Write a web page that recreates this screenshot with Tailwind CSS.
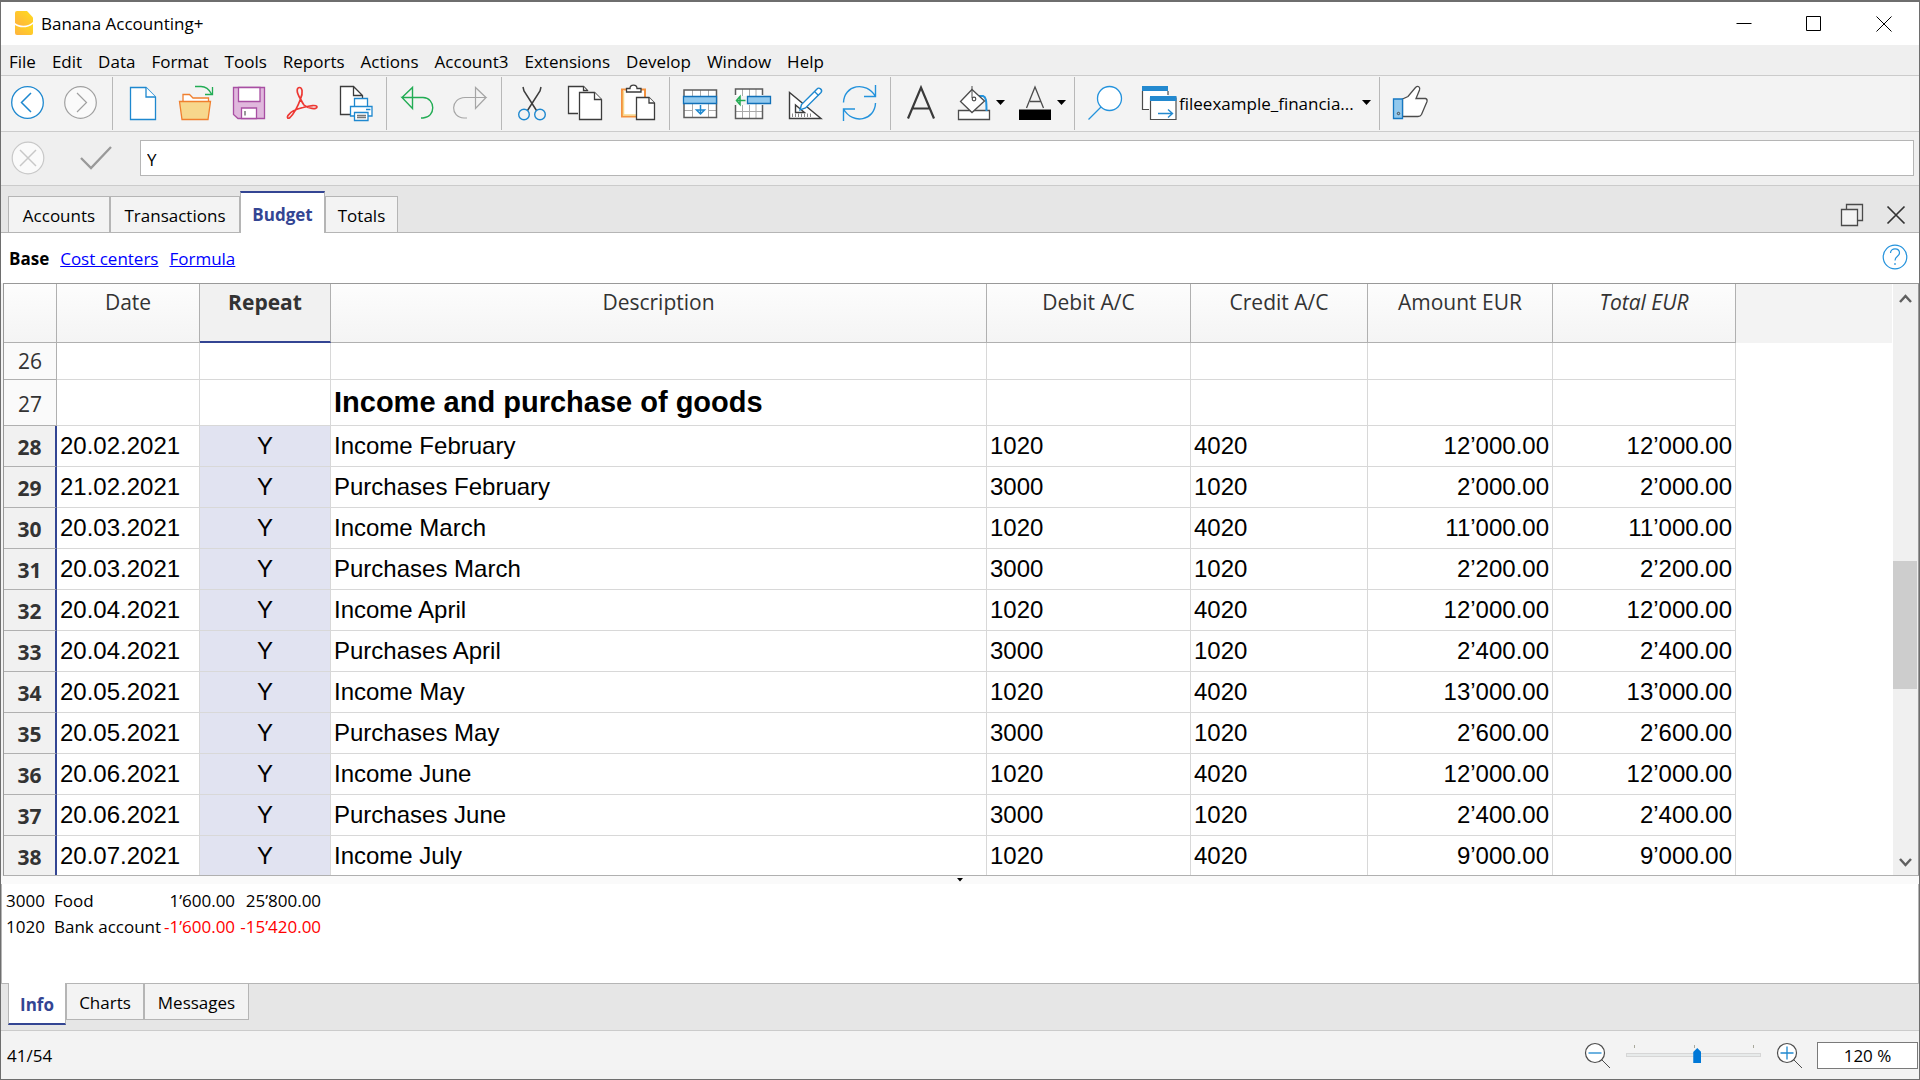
<!DOCTYPE html>
<html lang="en">
<head>
<meta charset="utf-8">
<title>Banana Accounting+</title>
<script src="https://cdn.jsdelivr.net/npm/@tailwindcss/browser@4"></script>
</head>
<body class="h-screen overflow-hidden bg-[#f3f3f3] font-['Open_Sans','Noto_Sans',sans-serif] text-[17px] leading-6 text-black">
<div class="flex h-full flex-col border border-t-2 border-[#6e6e6e]">

  <!-- Title bar -->
  <header class="flex h-[43px] shrink-0 items-center bg-white pl-[14px]">
    <svg class="mr-2 mb-0.5 h-6 w-[18px]" viewBox="0 0 18 24" aria-hidden="true">
      <defs><linearGradient id="logo" x1="1" y1="0" x2="0" y2="1"><stop offset="0" stop-color="#ffdd1c"/><stop offset="1" stop-color="#ffb23e"/></linearGradient></defs>
      <path d="M2 0H12L18 6.500V11C14 15.500 5 16 0 12V2Q0 0 2 0Z" fill="url(#logo)"/>
      <path d="M0 14C5 17.500 13 17 18 13V22Q18 24 16 24H2Q0 24 0 22Z" fill="url(#logo)"/>
    </svg>
    <h1>Banana Accounting+</h1>
    <div class="ml-auto flex h-full">
      <button class="w-[70px]" aria-label="Minimize"><svg class="mx-auto" width="16" height="16" viewBox="0 0 16 16"><path d="M.5 7.500H15.500" stroke="#000"/></svg></button>
      <button class="w-[70px]" aria-label="Maximize"><svg class="mx-auto" width="16" height="16" viewBox="0 0 16 16"><path d="M.5 .5H14.500V14.500H.5Z" fill="none" stroke="#000"/></svg></button>
      <button class="w-[70px]" aria-label="Close"><svg class="mx-auto" width="16" height="16" viewBox="0 0 16 16"><path d="M.5 .5L15.500 15.500M15.500 .5L.5 15.500" stroke="#000"/></svg></button>
    </div>
  </header>

  <!-- Menu -->
  <nav class="flex h-[31px] shrink-0 items-center gap-4 border-b border-[#cbcbcb] bg-[#efefef] pl-2 pt-[3px]" aria-label="Menu">
    <button>File</button><button>Edit</button><button>Data</button><button>Format</button><button>Tools</button><button>Reports</button><button>Actions</button><button>Account3</button><button>Extensions</button><button>Develop</button><button>Window</button><button>Help</button>
  </nav>

  <!-- Toolbar -->
  <div class="flex h-14 shrink-0 items-start border-b border-[#cbcbcb] bg-[#f3f3f3] pl-px pt-px [&>button]:mt-[3px] [&>label]:mt-[3px]" role="toolbar">
    <button aria-label="Back"><svg width="53" height="44" viewBox="2 80 53 44" fill="none"><circle cx="27.500" cy="102.500" r="15.800" fill="#fff" stroke="#1e88cf" stroke-width="1.300"/><path d="M31 93L21.500 102.500L31 112" stroke="#1e88cf" stroke-width="1.500"/></svg></button>
    <button aria-label="Forward"><svg width="53" height="44" viewBox="55 80 53 44" fill="none"><circle cx="80.500" cy="102.500" r="15.800" fill="#fafafa" stroke="#a0a0a0" stroke-width="1.200"/><path d="M77 93L86.500 102.500L77 112" stroke="#a0a0a0" stroke-width="1.200"/></svg></button>
    <div class="mx-1 h-[53px] w-px bg-[#b8b8b8]"></div>
    <button aria-label="New"><svg width="53" height="44" viewBox="117 80 53 44" fill="#fff" stroke="#1e88cf" stroke-width="1.300"><path d="M130.500 87.500H146L155.500 97V119.500H130.500Z"/><path d="M146 87.500V97H155.500"/></svg></button>
    <button aria-label="Open"><svg width="53" height="44" viewBox="170 80 53 44" fill="none"><path d="M183 101V94.500H189.500L193 98H208.500V101" fill="#fff" stroke="#f07f2e" stroke-width="1.300"/><path d="M179.500 101.500H210.500L208 119.500H182Z" fill="#f7d78c" stroke="#f07f2e" stroke-width="1.300"/><path d="M195 86.500H201C206 86.500 209 89 211.500 94M212.500 87V94.500H205" stroke="#22ac54" stroke-width="1.300"/></svg></button>
    <button aria-label="Save"><svg width="53" height="44" viewBox="223 80 53 44" stroke="#a84fa3" stroke-width="1.300"><path d="M233.500 87.500H264.500V118.500H238L233.500 114.500Z" fill="#e0b8dd"/><path d="M238.500 87.500H260V101.500H238.500Z" fill="#fff"/><path d="M241.500 118.500V108H256.500V118.500Z" fill="#fff"/><path d="M245 111V115.500" stroke="#777" stroke-width="1.500"/></svg></button>
    <button aria-label="PDF"><svg width="53" height="44" viewBox="276 80 53 44" fill="none" stroke="#ed3833" stroke-width="1.700"><path d="M300.500 99C295.500 91 297 87.500 299.500 87.500S303.500 92 300.500 99C298 106 293.500 114 290 117.500C288 119 286.500 118 288 115.500C290 112 296 109 303 107.500C310 105.500 317 104.500 317 107C317 109.500 308 109 304 105C302.500 103 301.500 101 300.500 99Z"/></svg></button>
    <button aria-label="Print preview"><svg width="53" height="44" viewBox="329 80 53 44"><path d="M340.500 86.500H353.500L362.500 95.500V114.500H340.500Z" fill="#fff"/><path d="M350 114.500H340.500V86.500H353.500L362.500 95.500V98M353.500 86.500V95.500H362" fill="none" stroke="#3c3c3c" stroke-width="1.300"/><g fill="#fff" stroke="#1e88cf" stroke-width="1.300"><path d="M354.500 98.500H367.500V107H354.500Z"/><path d="M350.500 106.500H372V116H350.500Z"/><path d="M354.500 112.500H368V120.500H354.500Z"/></g><path d="M366 109.500H370.500" stroke="#1e88cf" stroke-width="1.500"/><path d="M357 115.500H366M357 117.500H366" stroke="#777" stroke-width="1.300"/></svg></button>
    <div class="mx-1 h-[53px] w-px bg-[#b8b8b8]"></div>
    <button aria-label="Undo"><svg width="53" height="44" viewBox="391 80 53 44" fill="none" stroke="#22ac54" stroke-width="1.400"><path d="M402 97.500L412.500 87.500V108.500L402 97.500H423C436 98 436 117.500 423 118H421"/></svg></button>
    <button aria-label="Redo"><svg width="53" height="44" viewBox="444 80 53 44" fill="none" stroke="#a5a5a5" stroke-width="1.200"><path d="M486 97.500L475.500 87.500V108.500L486 97.500H465C450 98 450 117.500 464 118H467"/></svg></button>
    <div class="mx-1 h-[53px] w-px bg-[#b8b8b8]"></div>
    <button aria-label="Cut"><svg width="53" height="44" viewBox="506 80 53 44" fill="none"><path d="M523 87L524 91L536.500 110.500M541 87L540 91L527.500 110.500" stroke="#3c3c3c" stroke-width="1.500"/><circle cx="524" cy="114.500" r="5.300" stroke="#1e88cf" stroke-width="1.400"/><circle cx="540" cy="114.500" r="5.300" stroke="#1e88cf" stroke-width="1.400"/></svg></button>
    <button aria-label="Copy"><svg width="53" height="44" viewBox="559 80 53 44" fill="#fff" stroke="#3c3c3c" stroke-width="1.300"><path d="M578 113.500H568.500V86.500H583.500L588 91"/><path d="M583.500 86.500V90.500H587"/><path d="M579.500 92.500H594.500L601.500 99.500V119.500H579.500Z"/><path d="M594.500 92.500V99.500H601.500"/></svg></button>
    <button aria-label="Paste"><svg width="53" height="44" viewBox="612 80 53 44" fill="#fff"><path d="M622 89.500H645V116.500H622Z" fill="#fff" stroke="#f3913e" stroke-width="2"/><path d="M623.500 91V115H636" fill="none" stroke="#f7d78c" stroke-width="1.500"/><path d="M626.500 92V88.500H630C630 84 637 84 637 88.500H641V92Z" stroke="#3c3c3c" stroke-width="1.300"/><path d="M636.500 97.500H649L654.500 103V119.500H636.500Z" stroke="#3c3c3c" stroke-width="1.300"/><path d="M649 97.500V103H654.500" stroke="#3c3c3c" stroke-width="1.300"/></svg></button>
    <div class="mx-1 h-[53px] w-px bg-[#b8b8b8]"></div>
    <button aria-label="Insert rows"><svg width="53" height="44" viewBox="674 80 53 44" fill="none"><path d="M684 90H716.500V117.500H684Z" fill="#fff"/><path d="M692.500 90V117M700.500 90V96M708.500 90V117M684 110.500H692M709 110.500H716" stroke="#aaa"/><path d="M684 90H716.500V117.500H684Z" stroke="#5c5c5c" stroke-width="1.500"/><path d="M683.500 96.500H716.500V103.500H683.500Z" fill="#92c9ee" stroke="#1170b8" stroke-width="1.300"/><path d="M700.500 105V114M696.500 110L700.500 114L704.500 110Z" stroke="#1e88cf" stroke-width="1.500"/></svg></button>
    <button aria-label="Delete rows"><svg width="53" height="44" viewBox="727 80 53 44" fill="none"><path d="M735.500 89H762.500V118H735.500Z" fill="#fff"/><path d="M742.500 89V118M749.500 89V118M756 89V118M735.500 111.500H762.500" stroke="#aaa"/><path d="M735.500 95V89H762.500V95M735.500 105V118.500H762.500V105" stroke="#5c5c5c" stroke-width="1.500"/><path d="M735 96H750V105H735Z" fill="#f3f3f3"/><path d="M747.500 96.500H770.500V103.500H747.500Z" fill="#92c9ee" stroke="#1170b8" stroke-width="1.300"/><path d="M745.500 100.500H736.500M740 96.500L736.500 100.500L740 104.500Z" stroke="#22ac54" stroke-width="1.500"/></svg></button>
    <button aria-label="Recalculate"><svg width="53" height="44" viewBox="780 80 53 44" fill="none"><path d="M789.500 92.500V118.500H821Z" fill="#fff" stroke="#3c3c3c" stroke-width="1.400"/><path d="M795.500 105V112.500H804.500Z" stroke="#3c3c3c" stroke-width="1.400"/><path d="M792.500 113.500V117M795.500 113.500V117M798.500 113.500V117M801.500 113.500V117M804.500 113.500V117M807.500 113.500V117M810.500 113.500V117" stroke="#888"/><path d="M800 110L801.500 104.500L817 89C819 86.500 823 90 821 92.500L805.500 108Z" fill="#fff" stroke="#1e88cf" stroke-width="1.400"/><path d="M814.500 91.500L818.500 95.500" stroke="#1e88cf" stroke-width="1.300"/></svg></button>
    <button aria-label="Refresh"><svg width="53" height="44" viewBox="833 80 53 44" fill="none" stroke="#2392dc" stroke-width="1.400"><path d="M843.500 102.500C844 85 866 80.500 875.500 96.500M875.500 85V96.500H864"/><path d="M875.500 103C875 120 853 125.500 843.500 109M843.500 121V109H855"/></svg></button>
    <div class="mx-1 h-[53px] w-px bg-[#b8b8b8]"></div>
    <button aria-label="Bold"><svg width="53" height="44" viewBox="895 80 53 44" fill="none" stroke="#3a3a3a" stroke-width="2.200"><path d="M908 118.500L921 87.500L934 118.500M913 108.500H929"/></svg></button>
    <button aria-label="Background colour"><svg width="61" height="44" viewBox="948 80 61 44" fill="#fff"><path d="M958.500 110.500H989.500V119.500H958.500Z" stroke="#4c4c4c" stroke-width="1.300"/><path d="M977 96H983C986 97 986.500 100 986.500 111" fill="none" stroke="#2392dc" stroke-width="2"/><path d="M972 89.500L984.500 101L972 112.500L960.500 101.500Z" stroke="#4c4c4c" stroke-width="1.300"/><path d="M972 86V98" stroke="#4c4c4c"/><circle cx="974" cy="99" r="1.800" stroke="#4c4c4c" stroke-width="1.200"/><path d="M996 100H1005L1000.500 105Z" fill="#000"/></svg></button>
    <button aria-label="Text colour"><svg width="61" height="44" viewBox="1009 80 61 44" fill="none"><path d="M1019 109.500H1051V120H1019Z" fill="#000"/><path d="M1026.500 108L1035 87L1043.500 108M1030 101.500H1041" stroke="#4c4c4c" stroke-width="1.300"/><path d="M1057 100H1066L1061.500 105Z" fill="#000"/></svg></button>
    <div class="mx-1 h-[53px] w-px bg-[#b8b8b8]"></div>
    <button aria-label="Find"><svg width="53" height="44" viewBox="1079 80 53 44" stroke="#2392dc" stroke-width="1.300"><circle cx="1109.500" cy="98.500" r="12" fill="#fff"/><path d="M1101 107L1088.500 119.500"/></svg></button>
    <label class="relative flex h-11 w-[243px] items-center">
      <svg class="shrink-0" width="47" height="44" viewBox="1132 80 47 44" fill="#fff"><path d="M1142.500 88H1168V109.500H1142.500Z"/><path d="M1168 91V95M1142.500 91V109.500H1149" fill="none" stroke="#4c4c4c" stroke-width="1.200"/><path d="M1142 86H1168V91H1142Z" fill="#2389cf"/><path d="M1150.500 98H1176V119.500H1150.500Z" stroke="#4c4c4c" stroke-width="1.200"/><path d="M1150 96H1176.500V101H1150Z" fill="#2389cf"/><path d="M1158 113.500H1172.500M1168 109.500L1172.500 113.500L1168 117.500" fill="none" stroke="#2389cf" stroke-width="1.400"/></svg>
      <select class="mt-1 h-8 w-full appearance-none bg-transparent" aria-label="Open files"><option>fileexample_financia...</option></select>
      <svg class="pointer-events-none absolute right-1 top-5" width="9" height="5" viewBox="0 0 9 5"><path d="M0 0H9L4.500 5Z"/></svg>
    </label>
    <div class="mx-1 h-[53px] w-px bg-[#b8b8b8]"></div>
    <button aria-label="Like"><svg width="53" height="44" viewBox="1384 80 53 44"><path d="M1402.500 99L1408 96.500L1415.500 87.500C1418 85 1420.500 87 1419.500 90L1416 98.500H1425.500Q1427.500 99 1427 101.500L1421.500 114.500Q1420.500 116.500 1418 116.500H1402.500Z" fill="#fff" stroke="#4c4c4c" stroke-width="1.300"/><path d="M1393.500 99H1402.500V118.500H1393.500Z" fill="#92c9ee" stroke="#1678c2" stroke-width="1.300"/><circle cx="1398.500" cy="113.500" r="1.200" fill="none" stroke="#444"/></svg></button>
  </div>

  <!-- Cell entry -->
  <div class="flex h-[54px] shrink-0 items-start border-b border-[#cbcbcb] bg-[#efefef] pl-[10px] pr-[5px] pt-2">
    <button class="mt-px" aria-label="Cancel"><svg width="34" height="34" viewBox="0 0 34 34" fill="none" stroke="#c8c8c8"><circle cx="17" cy="17" r="15.800" fill="#fafafa" stroke-width="1.200"/><path d="M9 9L25 25M25 9L9 25" stroke-width="1.500"/></svg></button>
    <button class="ml-[35px] mt-px" aria-label="Confirm"><svg width="32" height="34" viewBox="0 0 32 34" fill="none"><path d="M1 17L11 27L31 6" stroke="#999" stroke-width="2.300"/></svg></button>
    <input class="ml-7 h-9 min-w-0 flex-1 border border-[#b5b5b5] bg-white px-[6px] pt-0.5 outline-none" aria-label="Cell content" value="Y">
  </div>

  <!-- Table tabs -->
  <div class="flex h-[47px] shrink-0 items-end bg-[#e6e6e6]">
    <div class="h-px w-[7px] bg-[#b5b5b5]"></div>
    <button class="h-[37px] w-[102px] border border-[#b5b5b5] bg-[#f3f3f3] pt-0.5">Accounts</button>
    <button class="h-[37px] w-[130px] border border-[#b5b5b5] bg-[#f3f3f3] pt-0.5">Transactions</button>
    <button class="h-[42px] w-[85px] border-x border-t-2 border-x-[#b5b5b5] border-t-[#334593] bg-white pt-1 font-bold text-[#334593]">Budget</button>
    <button class="h-[37px] w-[73px] border border-[#b5b5b5] bg-[#f3f3f3] pt-0.5">Totals</button>
    <div class="flex h-full flex-1 items-center justify-end gap-[22px] border-b border-[#b5b5b5] pr-[13px] pt-[11px]">
      <button aria-label="Restore"><svg width="24" height="24" viewBox="0 0 24 24" fill="none" stroke="#4a4a4a" stroke-width="1.300"><path d="M6.500 6V1.500H22.500V17.500H18"/><path d="M1.500 6.500H17.500V22.500H1.500Z" fill="#f3f3f3"/></svg></button>
      <button aria-label="Close table"><svg width="20" height="20" viewBox="0 0 20 20" stroke="#333" stroke-width="1.700"><path d="M1.500 1.500L18.500 18.500M18.500 1.500L1.500 18.500"/></svg></button>
    </div>
  </div>

  <!-- Views -->
  <nav class="flex h-[50px] shrink-0 items-center gap-[11px] bg-white pl-2 pr-[11px] pt-0.5" aria-label="Views">
    <strong>Base</strong>
    <a href="#cost" class="text-[#0000ff] underline">Cost centers</a>
    <a href="#formula" class="text-[#0000ff] underline">Formula</a>
    <button class="mb-1 ml-auto" aria-label="Help"><svg width="26" height="26" viewBox="0 0 26 26" fill="none" stroke="#2392dc" stroke-width="1.200"><circle cx="13" cy="13" r="11.800"/><path d="M8.500 9C8.500 3.500 17.500 3.500 17.500 9C17.500 12.500 13 12 13 16.500M13 19V21"/></svg></button>
  </nav>

  <!-- Budget table -->
  <main class="ml-0.5 flex min-h-0 flex-1 border border-b-[#b0b0b0] border-[#999] bg-white">
    <div class="min-w-0 flex-1 overflow-hidden">
      <div class="flex">
      <table class="w-[1732px] shrink-0 table-fixed border-separate border-spacing-0 font-['Liberation_Sans',Arial,sans-serif] text-2xl">
        <colgroup><col class="w-[53px]"><col class="w-[143px]"><col class="w-[131px]"><col class="w-[656px]"><col class="w-[204px]"><col class="w-[177px]"><col class="w-[185px]"><col class="w-[183px]"></colgroup>
        <thead>
          <tr class="h-[59px] bg-linear-to-b from-[#fdfdfd] to-[#f4f4f4] font-['Open_Sans','Noto_Sans',sans-serif] text-[21px] leading-7 text-[#333] *:border-b *:border-r *:border-[#b0b0b0] *:px-0 *:pb-0 *:pt-1 *:align-top *:font-normal">
            <th></th><th>Date</th>
            <th class="border-b-2! border-b-[#334593]! bg-[#f1f1f1] font-bold!">Repeat</th>
            <th>Description</th><th>Debit A/C</th><th>Credit A/C</th><th>Amount EUR</th><th class="italic">Total EUR</th>
          </tr>
        </thead>
        <tbody id="rows"></tbody>
      </table>
      <div class="h-[59px] flex-1 bg-[#f3f3f3]"></div>
      </div>
    </div>
    <div class="flex w-[26px] shrink-0 flex-col items-center border-l border-white bg-[#f0f0f0] pr-px">
      <svg class="mt-[9px] shrink-0" width="13" height="11" viewBox="0 0 13 11"><path d="M1 9L6.500 3L12 9" fill="none" stroke="#606060" stroke-width="2.500"/></svg>
      <div class="grow-255"></div>
      <div class="h-32 w-full shrink-0 bg-[#cdcdcd]"></div>
      <div class="grow-166"></div>
      <svg class="mb-[7px] shrink-0" width="13" height="11" viewBox="0 0 13 11"><path d="M1 2L6.500 8L12 2" fill="none" stroke="#606060" stroke-width="2.500"/></svg>
    </div>
  </main>

  <div class="flex h-2 shrink-0 justify-center bg-[#fafafa] pt-0.5"><svg width="6" height="4" viewBox="0 0 6 4"><path d="M0 0H6L3 3.500Z"/></svg></div>

  <!-- Info panel -->
  <section class="h-[99px] shrink-0 border-x border-[#b5b5b5] bg-white pl-1 pt-1">
    <table class="table-fixed border-separate border-spacing-0 whitespace-nowrap leading-[26px]">
      <colgroup><col class="w-[48px]"><col class="w-[106px]"><col class="w-[74px]"><col class="w-[86px]"></colgroup>
      <tr><td>3000</td><td>Food</td><td class="text-right">1’600.00</td><td class="text-right">25’800.00</td></tr>
      <tr><td>1020</td><td>Bank account</td><td class="text-right text-[#ff0000]">-1’600.00</td><td class="text-right text-[#ff0000]">-15’420.00</td></tr>
    </table>
  </section>

  <!-- Panel tabs -->
  <div class="flex h-12 shrink-0 items-start border-b border-[#cbcbcb] bg-[#e6e6e6]">
    <div class="h-px w-[7px] bg-[#b5b5b5]"></div>
    <button class="h-[42px] w-[58px] border-x border-b-2 border-x-[#b5b5b5] border-b-[#334593] bg-white pt-1 font-bold text-[#334593]">Info</button>
    <button class="h-[37px] w-[78px] border border-[#b5b5b5] bg-[#f3f3f3] pt-0.5">Charts</button>
    <button class="h-[37px] w-[105px] border border-[#b5b5b5] bg-[#f3f3f3] pt-0.5">Messages</button>
    <div class="h-px flex-1 bg-[#b5b5b5]"></div>
  </div>

  <!-- Status bar -->
  <footer class="flex h-12 shrink-0 items-center bg-[#f3f3f3] pl-[6px] pr-px">
    <span class="mr-auto pt-0.5">41/54</span>
    <button aria-label="Zoom out"><svg width="27" height="27" viewBox="0 0 27 27" fill="none" stroke="#4c4c4c"><circle cx="11" cy="11" r="9.500" fill="#fff" stroke-width="1.200"/><path d="M17.500 17.500L26 26"/><path d="M4.500 11H17.500" stroke="#1e88cf" stroke-width="1.300"/></svg></button>
    <div class="relative mx-[15px] flex h-6 items-center">
      <svg class="absolute left-2 top-0.5" width="120" height="3" viewBox="0 0 120 3"><path d="M.5 0V3M60.500 0V3M119.500 0V3" stroke="#a9a99c"/></svg>
      <input type="range" min="0" max="100" value="53" aria-label="Zoom" class="relative h-4 w-[135px] appearance-none bg-transparent [&::-webkit-slider-runnable-track]:h-1 [&::-webkit-slider-runnable-track]:border [&::-webkit-slider-runnable-track]:border-[#d6d6d6] [&::-webkit-slider-runnable-track]:bg-[#e7eaea] [&::-webkit-slider-thumb]:mt-[-6px] [&::-webkit-slider-thumb]:h-[15px] [&::-webkit-slider-thumb]:w-2 [&::-webkit-slider-thumb]:appearance-none [&::-webkit-slider-thumb]:bg-[#0078d7] [&::-webkit-slider-thumb]:[clip-path:polygon(50%_0,100%_27%,100%_100%,0_100%,0_27%)]">
    </div>
    <button aria-label="Zoom in"><svg width="27" height="27" viewBox="0 0 27 27" fill="none" stroke="#4c4c4c"><circle cx="11" cy="11" r="9.500" fill="#fff" stroke-width="1.200"/><path d="M17.500 17.500L26 26"/><path d="M4.500 11H17.500M11 4.500V17.500" stroke="#1e88cf" stroke-width="1.300"/></svg></button>
    <input class="ml-[14px] h-[27px] w-[101px] border border-[#7a7a7a] bg-white text-center outline-none" aria-label="Zoom percent" value="120 %">
  </footer>
</div>

<script>
  const months = [
    ["20.02.2021", "Income February", "12’000.00"], ["21.02.2021", "Purchases February", "2’000.00"],
    ["20.03.2021", "Income March", "11’000.00"], ["20.03.2021", "Purchases March", "2’200.00"],
    ["20.04.2021", "Income April", "12’000.00"], ["20.04.2021", "Purchases April", "2’400.00"],
    ["20.05.2021", "Income May", "13’000.00"], ["20.05.2021", "Purchases May", "2’600.00"],
    ["20.06.2021", "Income June", "12’000.00"], ["20.06.2021", "Purchases June", "2’400.00"],
    ["20.07.2021", "Income July", "9’000.00"]
  ];
  const empty = "<td></td>".repeat(4);
  let html = `
    <tr class="h-[37px] *:border-b *:border-r *:border-[#d8d8d8]"><th class="bg-[#fafafa] border-r-[#b0b0b0]! border-b-[#b0b0b0]! p-0 font-['Open_Sans','Noto_Sans',sans-serif] text-[21px] font-normal leading-7 text-[#333]">26</th><td></td><td></td><td></td>${empty}</tr>
    <tr class="h-[46px] *:border-b *:border-r *:border-[#d8d8d8]"><th class="bg-[#fafafa] border-r-[#b0b0b0]! border-b-[#b0b0b0]! p-0 pt-0.5 font-['Open_Sans','Noto_Sans',sans-serif] text-[21px] font-normal leading-7 text-[#333]">27</th><td></td><td></td><td class="px-[3px] pt-0 pb-0.5 text-[29px] font-bold leading-8">Income and purchase of goods</td>${empty}</tr>`;
  months.forEach(([date, text, sum], i) => {
    const income = i % 2 === 0;
    html += `
    <tr class="h-[41px] *:border-b *:border-r *:border-[#d8d8d8] *:px-[3px] *:py-0 *:leading-8">
      <th class="bg-[#f1f1f1] border-r-2! border-r-[#334593]! border-b-[#b0b0b0]! pt-0.5! font-['Open_Sans','Noto_Sans',sans-serif] text-[21px] font-bold text-[#333]">${28 + i}</th>
      <td>${date}</td><td class="bg-[#e1e3f1] text-center">Y</td><td>${text}</td>
      <td>${income ? "1020" : "3000"}</td><td>${income ? "4020" : "1020"}</td>
      <td class="text-right">${sum}</td><td class="text-right">${sum}</td>
    </tr>`;
  });
  document.getElementById("rows").innerHTML = html;
</script>
</body>
</html>
